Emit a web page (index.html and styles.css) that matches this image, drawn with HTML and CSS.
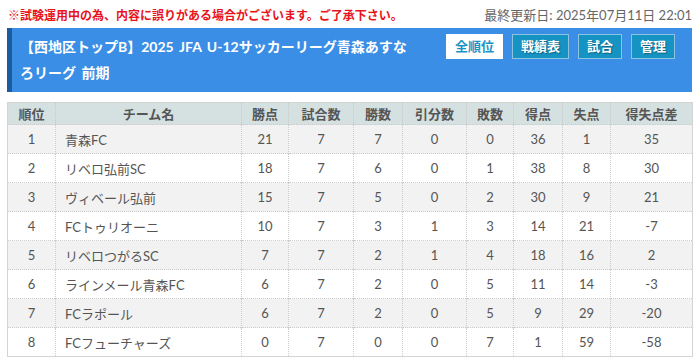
FILE: index.html
```html
<!DOCTYPE html>
<html lang="ja">
<head>
<meta charset="utf-8">
<link rel="stylesheet" href="styles.css">
</head>
<body>
<div class="page">
  <div class="notice-bar">
    <p class="notice">※試験運用中の為、内容に誤りがある場合がございます。ご了承下さい。</p>
    <p class="updated">最終更新日: 2025年07月11日 22:01</p>
  </div>
  <div class="league-head">
    <h1 class="league-title">【西地区トップB】2025 JFA U-12サッカーリーグ青森あすなろリーグ 前期</h1>
    <nav class="tabs">
      <a class="tab active">全順位</a>
      <a class="tab">戦績表</a>
      <a class="tab">試合</a>
      <a class="tab">管理</a>
    </nav>
  </div>
  <table class="standings">
    <colgroup>
      <col style="width:48px"><col style="width:186px"><col style="width:47px"><col style="width:65px"><col style="width:49px"><col style="width:64px"><col style="width:47px"><col style="width:49px"><col style="width:48px"><col style="width:82px">
    </colgroup>
    <thead>
      <tr><th>順位</th><th>チーム名</th><th>勝点</th><th>試合数</th><th>勝数</th><th>引分数</th><th>敗数</th><th>得点</th><th>失点</th><th>得失点差</th></tr>
    </thead>
    <tbody>
      <tr><td>1</td><td class="team">青森FC</td><td>21</td><td>7</td><td>7</td><td>0</td><td>0</td><td>36</td><td>1</td><td>35</td></tr>
      <tr><td>2</td><td class="team">リベロ弘前SC</td><td>18</td><td>7</td><td>6</td><td>0</td><td>1</td><td>38</td><td>8</td><td>30</td></tr>
      <tr><td>3</td><td class="team">ヴィベール弘前</td><td>15</td><td>7</td><td>5</td><td>0</td><td>2</td><td>30</td><td>9</td><td>21</td></tr>
      <tr><td>4</td><td class="team">FCトゥリオーニ</td><td>10</td><td>7</td><td>3</td><td>1</td><td>3</td><td>14</td><td>21</td><td>-7</td></tr>
      <tr><td>5</td><td class="team">リベロつがるSC</td><td>7</td><td>7</td><td>2</td><td>1</td><td>4</td><td>18</td><td>16</td><td>2</td></tr>
      <tr><td>6</td><td class="team">ラインメール青森FC</td><td>6</td><td>7</td><td>2</td><td>0</td><td>5</td><td>11</td><td>14</td><td>-3</td></tr>
      <tr><td>7</td><td class="team">FCラポール</td><td>6</td><td>7</td><td>2</td><td>0</td><td>5</td><td>9</td><td>29</td><td>-20</td></tr>
      <tr><td>8</td><td class="team">FCフューチャーズ</td><td>0</td><td>7</td><td>0</td><td>0</td><td>7</td><td>1</td><td>59</td><td>-58</td></tr>
    </tbody>
  </table>
</div>
</body>
</html>
```
FILE: styles.css
```css
* { box-sizing: border-box; }
html, body { margin: 0; padding: 0; background: #fff; }
body {
  font-family: Lato, "Noto Sans CJK JP", sans-serif;
  color: #555;
}
.page { padding: 0 8px 0 7px; }

.notice-bar {
  display: flex;
  justify-content: space-between;
  align-items: center;
  height: 28px;
  padding: 0 0 0 1px;
}
.notice {
  margin: 0;
  color: #e8141c;
  font-weight: bold;
  font-size: 12px;
}
.updated {
  margin: 0;
  color: #666;
  font-size: 13px;
}

.league-head {
  display: flex;
  justify-content: space-between;
  align-items: flex-start;
  background: #3b8ee6;
  border-left: 5px solid #1b5b9e;
  padding: 6px 17px 6px 8px;
  height: 64px;
}
.league-title {
  margin: 0;
  width: 390px;
  color: #fff;
  font-size: 14px;
  font-weight: bold;
  line-height: 26px;
  word-spacing: 2px;
}
.tabs {
  display: flex;
  gap: 9px;
}
.tab {
  display: block;
  height: 25px;
  line-height: 23px;
  padding: 0 8px;
  font-size: 13px;
  font-weight: bold;
  color: #fff;
  background: #1593c3;
  border: 1px solid #8cc3e0;
  text-shadow: 1px 1px 1px rgba(0,0,0,0.35);
  white-space: nowrap;
}
.tab.active {
  background: #fff;
  color: #1a94c4;
  border-color: #fff;
  text-shadow: none;
}

.standings {
  margin-top: 10px;
  width: 685px;
  table-layout: fixed;
  border-collapse: collapse;
  border: 1px solid #d4d4d4;
  font-size: 13px;
}
.standings th {
  height: 22px;
  background: #d5e1e1;
  color: #555;
  font-weight: bold;
  text-align: center;
  padding: 0;
  border-left: 1px dotted #c8c8c8;
}
.standings td {
  height: 29px;
  text-align: center;
  padding: 0;
  border-left: 1px dotted #ccc;
  border-top: 1px dotted #ccc;
}
.standings td.team {
  text-align: left;
  padding-left: 9px;
}
.standings tbody tr:nth-child(odd) { background: #f2f2f2; }
.standings tbody tr:nth-child(even) { background: #fff; }
```
